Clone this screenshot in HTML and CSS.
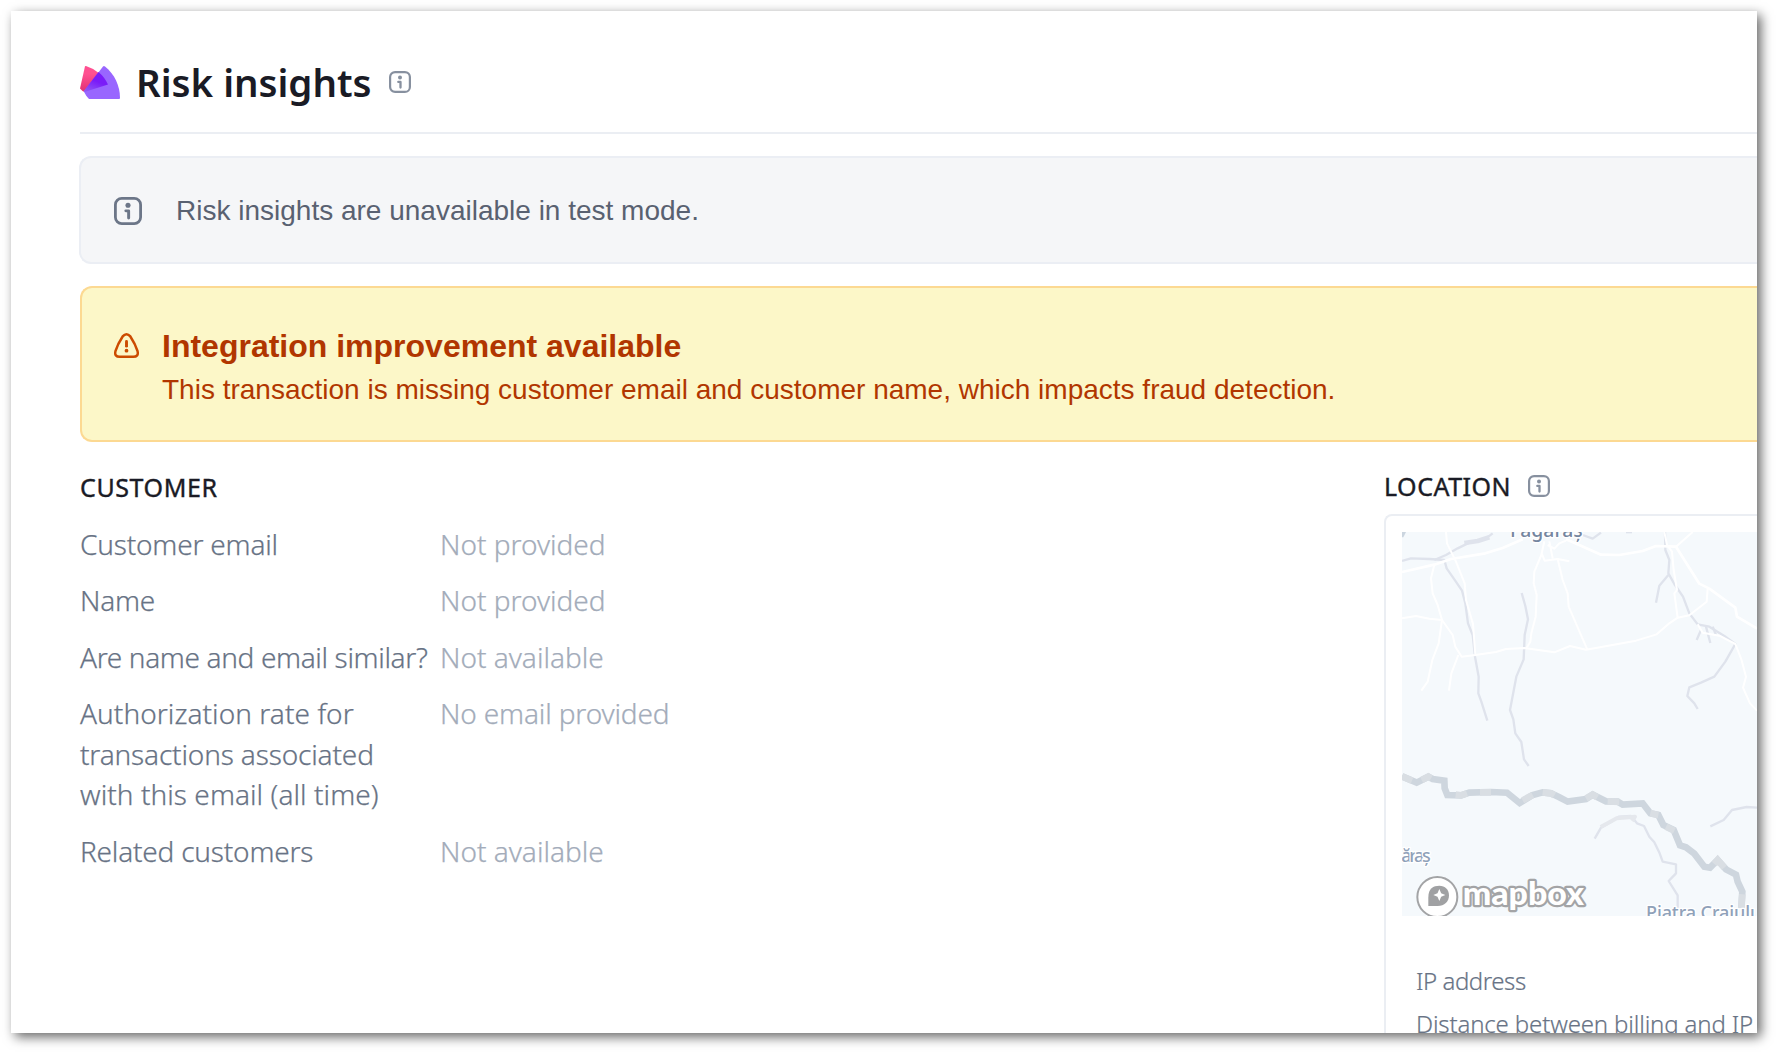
FILE: index.html
```html
<!DOCTYPE html>
<html lang="en">
<head>
<meta charset="utf-8">
<title>Risk insights</title>
<link rel="stylesheet" href="styles.css">
</head>
<body>
<svg width="0" height="0" class="defs" aria-hidden="true">
  <symbol id="info" viewBox="0 0 22 22">
    <rect x="1.1" y="1.1" width="19.8" height="19.8" rx="5" fill="none" stroke="currentColor" stroke-width="2.2"/>
    <circle cx="11" cy="6.500" r="2" fill="currentColor"/>
    <path d="M9.300 10.900h2.200v5.600" fill="none" stroke="currentColor" stroke-width="2.300" stroke-linecap="round" stroke-linejoin="round"/>
  </symbol>
</svg>
<main class="panel">
  <header class="panel-header">
    <svg class="logo" viewBox="0 0 40 33">
      <defs><linearGradient id="pink" x1="0" y1="0" x2="0" y2="1"><stop offset="0.3" stop-color="#ff5091"/><stop offset="1" stop-color="#e03071"/></linearGradient>
      <linearGradient id="mix" x1="0.6" y1="0.2" x2="0.2" y2="1"><stop offset="0.3" stop-color="#7a1bf8"/><stop offset="1" stop-color="#9157f5"/></linearGradient></defs>
      <path d="M5 .3Q5.500 0 6 .1Q20 4.500 28 18.500L4.500 26Q2 25 0 22.500Z" fill="url(#pink)"/>
      <path d="M23 .4Q24 -.2 25 .5C34.500 8 40 20 40 32Q40 33 39 33H9Q6 30 3.800 25.500Z" fill="#9966ff"/>
      <path d="M18.500 6Q24.500 11 28 18.500L4.500 26L3.800 25Z" fill="url(#mix)"/>
    </svg>
    <h1 class="title">Risk insights</h1>
    <svg class="info-icon"><use href="#info"/></svg>
  </header>
  <section class="notice">
    <svg class="notice-icon"><use href="#info"/></svg>
    <p class="notice-text">Risk insights are unavailable in test mode.</p>
  </section>
  <section class="warning">
    <svg class="warning-icon" viewBox="0 0 24 24" fill="none" stroke="currentColor" stroke-width="2.400">
      <path d="M8.300 3.300Q12 -.9 15.700 3.300Q20.500 10.500 22.600 17.500C23.500 21 22 22.800 18.500 22.800H5.500C2 22.800 .5 21 1.400 17.500Q3.500 10.500 8.300 3.300Z"/>
      <path d="M12 8.200v4.400" stroke-linecap="round" stroke-width="2.800"/><circle cx="12" cy="17" r="1.800" fill="currentColor" stroke="none"/>
    </svg>
    <div>
      <h2 class="warning-title">Integration improvement available</h2>
      <p class="warning-text">This transaction is missing customer email and customer name, which impacts fraud detection.</p>
    </div>
  </section>
  <div class="columns">
    <section class="customer">
      <h3 class="section-title customer-title">CUSTOMER</h3>
      <dl class="facts">
        <dt>Customer email</dt><dd>Not provided</dd>
        <dt>Name</dt><dd>Not provided</dd>
        <dt class="tight">Are name and email similar?</dt><dd>Not available</dd>
        <dt><span class="loose">Authorization rate for</span><br><span class="snug">transactions associated</span><br><span class="loose">with this email (all time)</span></dt><dd class="snug">No email provided</dd>
        <dt>Related customers</dt><dd>Not available</dd>
      </dl>
    </section>
    <section class="location">
      <div class="location-head">
        <h3 class="section-title">LOCATION</h3>
        <svg class="info-icon"><use href="#info"/></svg>
      </div>
      <div class="card">
        <svg class="map" viewBox="78 216 1065 1152">
          <rect x="78" y="216" width="1065" height="1152" fill="#f5f9fc"/>
          <g fill="none" stroke-linejoin="round">
            <g stroke="#dfe3ec" stroke-width="7">
              <path d="M78 303L105 295L160 297L205 300L212 325L235 358L258 392L268 430L276 490L290 525L297 590L308 650L307 700L316 725L334 782"/>
              <path d="M437 399L448 438L456 478L446 525L443 598L421 650L402 750L412 778L418 820L436 846L444 898L458 918"/>
              <path d="M867 216L868 270L880 300L877 340L895 372L921 410L940 460L965 493L1000 500L1045 528L1078 552L1048 605L1015 650L975 668L940 682L934 708L955 730L965 747"/>
              <path d="M877 345L850 377L840 428"/><path d="M975 510L962 540M990 500L1003 549M1010 500L1020 525"/>
              <path d="M175 300L210 285L245 265L280 248L330 235L350 220M620 225L650 236L675 218"/>
              <path d="M265 249L305 243L340 232" stroke-width="14"/>
              <path d="M750 216H768" stroke-width="8"/>
              <path d="M1003 1099L1043 1080L1068 1050L1112 1041L1143 1043"/>
              <path d="M656 1136L675 1103L705 1086L728 1070L765 1068L783 1090L804 1098L820 1130L835 1147L851 1180L860 1205L900 1213V1240L878 1263L905 1306V1344"/>
              <path d="M674 1101L722 1075L777 1070L768 1083" stroke-width="12" stroke="#e5e8ed"/>
            </g>
            <path d="M78 216H90L82 232H78Z" fill="#cbd5df"/>
            <g stroke="#fff" stroke-width="6">
              <path d="M78 336L175 314L225 297L328 280L380 264L440 238M570 238L608 254L675 284L730 285L800 273L840 258L900 260L970 371L1000 386L1078 443L1083 470L1143 506" stroke-width="8"/>
              <path d="M210 216L213 250L240 305L266 370L270 420L291 492L298 585"/>
              <path d="M175 314L165 355L170 400L185 435L198 480L230 525L238 560L257 590L298 585L360 576L390 567L445 564L535 577L582 558L630 569L780 542L842 523L880 490L905 473L940 466L992 425L995 386"/>
              <path d="M78 475L120 468L160 476L198 480L188 550L169 600L155 665L136 692M247 585L226 640L219 692"/>
              <path d="M505 244L496 285L475 335L473 370L482 405L479 470L466 520L463 545L450 567M496 278L506 302L545 297L580 304M520 244L530 295M545 297L560 360L575 400L578 440L634 569M515 255L535 266L550 250L570 242"/>
              <path d="M865 216L873 255L888 275L893 330L903 390L895 400L905 473M900 260L950 216M965 493L980 518L1030 527L1078 552L1096 598L1110 650L1101 683L1122 730L1143 752"/>
            </g>
            <g stroke-width="20" stroke="#ced6de" stroke-linejoin="miter">
              <path d="M78 949L122 968L157 950L170 957L205 962L206 985L214 1005L255 1006L280 998L345 996L393 998L431 1029L470 1005L500 997L525 1000L550 1012L575 1025L630 1017L650 1004L690 1024L725 1025L740 1034L800 1030L823 1060L847 1065L862 1095L893 1110L912 1156L930 1162L955 1181L985 1220L1002 1223L1025 1200L1050 1228L1080 1244L1085 1265L1099 1295L1096 1344"/>
              <path d="M78 949L108 962M137 960L157 950L165 955M239 1004L255 1006L273 1000M312 997H345M440 1021L470 1005M500 997L525 1000L535 1006M630 1015L650 1004L664 1012M695 1024L730 1026M823 1060L847 1065M870 1100L895 1112M1015 1212L1025 1200L1045 1223M1099 1303L1096 1344" stroke="#d9dee3"/>
            </g>
          </g>
          <g class="map-label">
            <text x="402" y="231" font-size="58" fill="#75869f" textLength="218">Făgăraș</text>
            <text x="76" y="1207" font-size="54" fill="#8fa1b9" textLength="88">ăraș</text>
            <text x="810" y="1376" font-size="54" fill="#8fa1b9" textLength="360">Piatra Craiului</text>
          </g>
          <circle cx="184" cy="1311" r="60" fill="#fff" stroke="#a3a4a6" stroke-width="6"/>
          <path d="M157 1338V1312C157 1285 172 1277 190 1277C207 1277 219 1289 219 1306C219 1326 205 1338 185 1338Z" fill="#a0a1a3"/>
          <path d="M190 1287L195.500 1299.500L208 1305L195.500 1310.500L190 1323L184.500 1310.500L172 1305L184.500 1299.500Z" fill="#fff"/>
          <text class="mapbox-word" x="260" y="1335" textLength="364" lengthAdjust="spacingAndGlyphs">mapbox</text>
        </svg>
        <ul class="card-rows">
          <li class="ip">IP address</li>
          <li>Distance between billing and IP</li>
        </ul>
      </div>
    </section>
  </div>
</main>
</body>
</html>
```
FILE: styles.css
```css
* { box-sizing: border-box; margin: 0; padding: 0; }

body {
  height: 1052px;
  padding: 11px 19px 19px 11px;
  overflow: hidden;
  background: #fff;
  font-family: "Noto Sans", sans-serif;
  color: #1a1b25;
}

.defs { display: block; height: 0; }

.panel {
  height: 1022px;
  padding: 37px 0 0 69px;
  overflow: hidden;
  background: #fff;
  box-shadow: 4px 4px 11px rgba(0, 0, 0, 0.6);
}

.panel-header {
  display: flex;
  align-items: center;
  height: 86px;
  padding-bottom: 16px;
  border-bottom: 2px solid #ebeef3;
}

.logo { width: 40px; height: 33px; margin-right: 16px; }

.title {
  margin-right: 17px;
  font-size: 38.5px;
  line-height: 68px;
  font-weight: 600;
  letter-spacing: -0.03px;
}

.info-icon { width: 22px; height: 22px; color: #87909f; }

.notice {
  display: flex;
  align-items: center;
  height: 108px;
  margin: 22px 0 0 -1px;
  padding: 2px 0 0 33px;
  border: 2px solid #ebeef4;
  border-right: 0;
  border-radius: 12px 0 0 12px;
  background: #f5f6f8;
}

.notice-icon { width: 28px; height: 28px; margin-right: 34px; color: #6c7688; }

.notice-text {
  font: 28px/40px "Liberation Sans", sans-serif;
  color: #596171;
}

.warning {
  display: flex;
  height: 156px;
  margin-top: 22px;
  padding: 38px 0 0 32px;
  border: 2px solid #fcd992;
  border-right: 0;
  border-radius: 12px 0 0 12px;
  background: #fcf7c8;
  color: #b13600;
  font-family: "Liberation Sans", sans-serif;
}

.warning-icon { width: 25px; height: 25px; margin: 7px 23.5px 0 -0.5px; color: #cc4b00; }
.warning-title { font-size: 32px; line-height: 40px; }
.warning-text { font-size: 28px; line-height: 47px; }

.columns {
  display: grid;
  grid-template-columns: 1304px 1fr;
  padding-top: 28px;
}

.section-title {
  font-size: 25px;
  line-height: 32px;
  font-weight: 400;
  letter-spacing: 0.5px;
  -webkit-text-stroke: 0.4px;
}

.customer-title { padding-top: 1px; letter-spacing: 0.6px; }

.facts {
  display: grid;
  grid-template-columns: 360px 1fr;
  row-gap: 16px;
  padding-top: 20.8px;
  font-size: 28px;
  line-height: 40.5px;
  font-weight: 300;
  -webkit-text-stroke: 0.25px;
}

.facts dt { color: #687385; letter-spacing: -0.2px; white-space: nowrap; }
.facts dd { color: #a3acba; }
.facts .tight { letter-spacing: -0.35px; }
.facts .snug { letter-spacing: -0.15px; }
.facts .loose { letter-spacing: 0.06px; }

.location-head { display: flex; align-items: center; gap: 17px; }

.card {
  height: 600px;
  margin-top: 12px;
  padding: 16px 0 0 16px;
  border: 2px solid #ebeef3;
  border-right: 0;
  border-radius: 8px 0 0 8px;
}

.map { display: block; width: 355px; height: 384px; }

.map-label {
  font-weight: 500;
  stroke: #fff;
  stroke-width: 8px;
  paint-order: stroke;
  stroke-linejoin: round;
}

.mapbox-word {
  font: 900 98px Lato, sans-serif;
  fill: #fff;
  stroke: #a3a4a6;
  stroke-width: 13px;
  paint-order: stroke;
  stroke-linejoin: round;
}

.card-rows {
  padding: 43px 0 0 14px;
  list-style: none;
  font-size: 24px;
  line-height: 43px;
  font-weight: 300;
  color: #687385;
  white-space: nowrap;
  -webkit-text-stroke: 0.2px;
}

.card-rows li { letter-spacing: -0.15px; }
.card-rows .ip { letter-spacing: -0.45px; }
```
